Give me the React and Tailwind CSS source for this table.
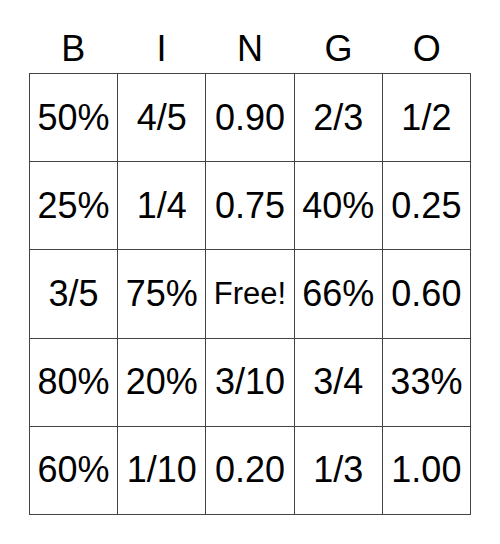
const LETTERS = ['B', 'I', 'N', 'G', 'O']

const CELLS = [
  ['50%', '4/5', '0.90', '2/3', '1/2'],
  ['25%', '1/4', '0.75', '40%', '0.25'],
  ['3/5', '75%', 'Free!', '66%', '0.60'],
  ['80%', '20%', '3/10', '3/4', '33%'],
  ['60%', '1/10', '0.20', '1/3', '1.00'],
]

export default function App() {
  return (
    <div className="w-[500px] h-[544px] bg-white text-black font-['Liberation_Sans',Arial,sans-serif]">
      <div className="pl-[29px] pt-[31px]">
        {/* Header */}
        <div className="grid grid-cols-5 w-[442px] h-[36px] mb-[6px]">
          {LETTERS.map(l => (
            <div key={l} className="text-center text-[36px] leading-none">{l}</div>
          ))}
        </div>

        {/* Card */}
        <div className="grid grid-cols-5 w-[442px] border-t border-l border-[#444]">
          {CELLS.flat().map((v, i) => (
            <div
              key={i}
              className="h-[88.2px] border-r border-b border-[#444] flex items-center justify-center leading-none"
            >
              <span className={v === 'Free!' ? 'text-[31px]' : 'text-[36px]'}>{v}</span>
            </div>
          ))}
        </div>
      </div>
    </div>
  )
}
